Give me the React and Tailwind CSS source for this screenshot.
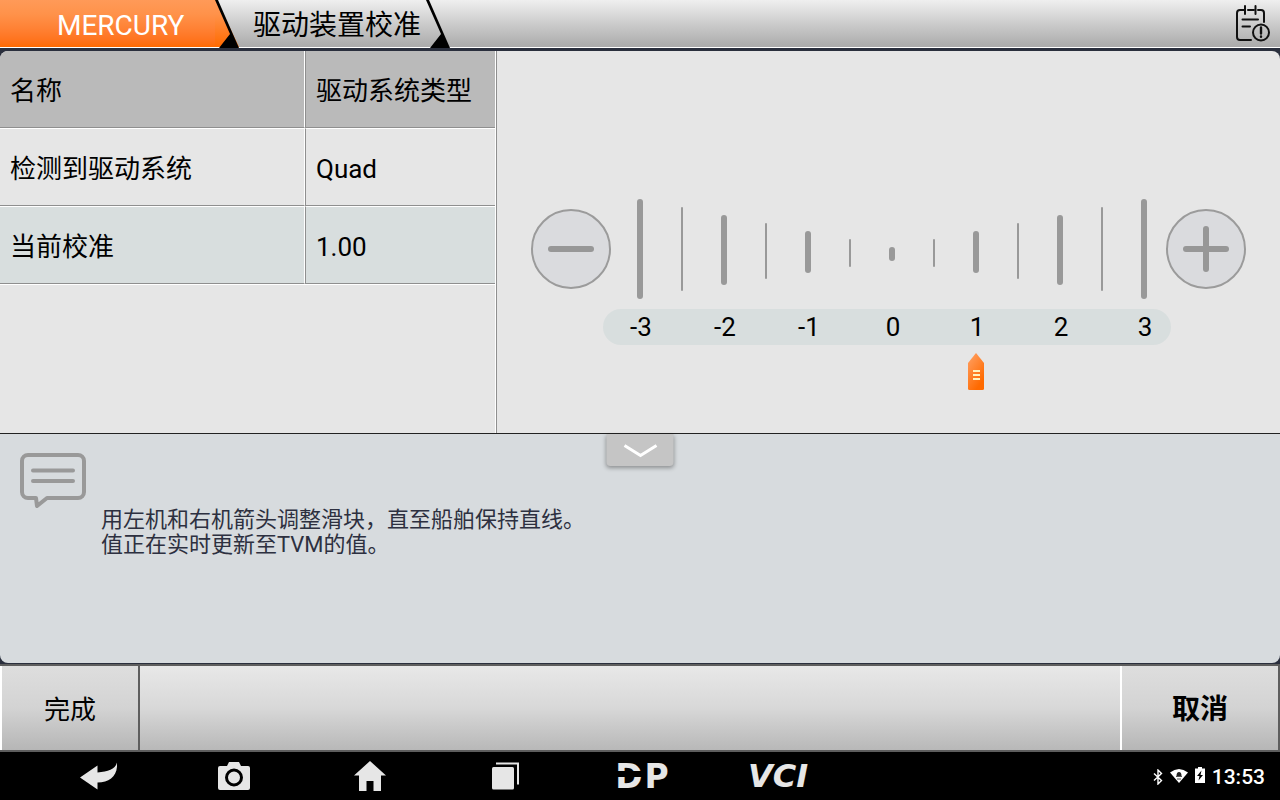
import React, { useState } from "react";

const rows = [
  { name: "检测到驱动系统", value: "Quad" },
  { name: "当前校准", value: "" },
];

const ticks = [
  "h-[100px] w-[6px]",
  "mt-2 h-[84px] w-[2px]",
  "mt-4 h-[70px] w-[6px]",
  "mt-6 h-[56px] w-[2px]",
  "mt-8 h-[42px] w-[6px]",
  "mt-10 h-[28px] w-[2px]",
  "mt-12 h-[14px] w-[6px]",
  "mt-10 h-[28px] w-[2px]",
  "mt-8 h-[42px] w-[6px]",
  "mt-6 h-[56px] w-[2px]",
  "mt-4 h-[70px] w-[6px]",
  "mt-2 h-[84px] w-[2px]",
  "h-[100px] w-[6px]",
];

const labels = [-3, -2, -1, 0, 1, 2, 3];

function TabEdge({ active }) {
  return (
    <svg className="h-12 w-6 shrink-0" viewBox="0 0 24 48" aria-hidden="true">
      <defs>
        <linearGradient id="tabOrange" x1="0" y1="0" x2="0" y2="1">
          <stop offset="0" stopColor="#ff9a58" />
          <stop offset="0.3" stopColor="#ff924a" />
          <stop offset="1" stopColor="#ff6a00" />
        </linearGradient>
      </defs>
      {active && <path d="M0 0h2l22 47H0z" fill="url(#tabOrange)" />}
      <path d="M0 0h3l21 48H4l11-14z" fill="#000" />
    </svg>
  );
}

function Header() {
  return (
    <header className="flex h-12 items-stretch bg-linear-to-b from-[#efefef] to-[#a9a9a9] text-[28px] leading-[43px] shadow-[inset_0_-1px_0_#fff]">
      <a href="#mercury" className="w-[215px] border-b border-white bg-linear-to-b from-[#ff9a58] via-[#ff924a] via-30% to-[#ff6a00] pt-1 pl-[57px] text-white">
        MERCURY
      </a>
      <TabEdge active />
      <a href="#calibration" className="w-[187px] pt-1 pl-[14px] text-black">驱动装置校准</a>
      <TabEdge />
      <button aria-label="Report" className="ml-auto pr-[9px]">
        <svg className="h-10 w-9" viewBox="0 0 36 40" fill="none" stroke="#111" strokeWidth="2" strokeLinecap="round">
          <path d="M16 36H5a3 3 0 0 1-3-3V9a3 3 0 0 1 3-3h4M13 6h6M23 6h3a3 3 0 0 1 3 3v9" />
          <path d="M10 2v8M20.500 2v8M7.500 15.500H23M7.500 22.500H15" />
          <circle cx="26" cy="28.500" r="8" />
          <path d="M26 23.500v6M26 32.500v0.200" strokeWidth="2.400" />
        </svg>
      </button>
    </header>
  );
}

function DataTable({ value }) {
  return (
    <div className="w-[496px] shrink-0 border-r border-white">
      <table className="w-full table-fixed border-separate border-spacing-0 border-b border-white text-left text-[26px] leading-8">
        <thead>
          <tr className="bg-[#bababa]">
            <th className="h-[77px] w-[305px] border-r border-b border-r-white border-b-[#8f8f8f] pt-[3px] pl-[10px] font-normal">名称</th>
            <th className="border-b border-l border-[#8f8f8f] pt-[3px] pl-[10px] font-normal">驱动系统类型</th>
          </tr>
        </thead>
        <tbody>
          {rows.map((row, i) => (
            <tr key={row.name} className={i % 2 ? "bg-[#d8dede]" : ""}>
              <td className="h-[78px] border-t border-r border-b border-white border-b-[#8f8f8f] pt-[3px] pl-[10px]">{row.name}</td>
              <td className="border-t border-b border-l border-t-white border-b-[#8f8f8f] border-l-[#8f8f8f] pt-[3px] pl-[10px]">
                {row.value || value.toFixed(2)}
              </td>
            </tr>
          ))}
        </tbody>
      </table>
    </div>
  );
}

function RoundButton({ label, plus, onClick }) {
  return (
    <button aria-label={label} onClick={onClick} className="h-20 w-20 shrink-0 rounded-full border-2 border-[#9b9b9b] bg-[#dadbde]">
      <svg className="mx-auto h-12 w-12" viewBox="0 0 48 48" stroke="#979797" strokeWidth="6" strokeLinecap="round">
        <path d="M4 24h40" />
        {plus && <path d="M24 4v40" />}
      </svg>
    </button>
  );
}

function Scale({ value, setValue }) {
  const step = (d) => setValue(Math.max(-3, Math.min(3, value + d)));

  return (
    <div className="flex-1 border-l border-[#8f8f8f] pt-[148px] pb-10">
      <div className="flex items-center px-[34px]">
        <RoundButton label="-" onClick={() => step(-0.5)} />
        <div className="flex h-[100px] flex-1 items-start justify-between pr-[19px] pl-[26px]">
          {ticks.map((tick, i) => (
            <div key={i} className="flex w-[6px] justify-center">
              <span className={"shrink-0 rounded-full bg-[#999] " + tick} />
            </div>
          ))}
        </div>
        <RoundButton label="+" plus onClick={() => step(0.5)} />
      </div>

      <div className="mt-[10px] mr-[109px] ml-[106px] flex h-9 justify-between rounded-full bg-[#d8dede] pr-2 pl-5 text-[26px] leading-9">
        {labels.map((n) => (
          <span key={n} className="w-9 text-center">{n}</span>
        ))}
      </div>

      {/* pointer under the scale */}
      <div className="relative mt-2 mr-[136px] ml-[142px] h-[38px]">
        <svg
          className="absolute top-0 h-[38px] w-4 -translate-x-1/2"
          style={{ left: ((value + 3) / 6) * 100 + "%" }}
          viewBox="0 0 16 38"
        >
          <defs>
            <linearGradient id="pointer" x1="0" y1="0.2" x2="0.5" y2="1">
              <stop offset="0" stopColor="#ff9a58" />
              <stop offset="1" stopColor="#ff6a00" />
            </linearGradient>
          </defs>
          <path d="M8 0l8 10v25.500q0 1.500-1.500 1.500h-13Q0 37 0 35.500V10z" fill="url(#pointer)" />
          <path d="M5 18h7M5 22h7M5 26h7" stroke="#fff3c0" strokeWidth="2" />
        </svg>
        <input
          type="range"
          aria-label="当前校准"
          min="-3"
          max="3"
          step="0.5"
          value={value}
          onChange={(e) => setValue(Number(e.target.value))}
          className="h-full w-full cursor-pointer opacity-0"
        />
      </div>
    </div>
  );
}

function Message({ open, toggle }) {
  return (
    <section className={"relative rounded-b-lg bg-[#d7dbde] " + (open ? "min-h-[229px]" : "min-h-8")}>
      <button
        aria-label="Toggle message"
        onClick={toggle}
        className="absolute top-0 left-1/2 flex h-8 w-[67px] -translate-x-1/2 justify-center rounded-b bg-[#c5c5c5] pt-[9px] shadow-[0_2px_4px_rgba(0,0,0,0.35)]"
      >
        <svg className="h-4 w-9" viewBox="0 0 36 16" fill="none" stroke="#fff" strokeWidth="3">
          <path d="M2 2.500l16 10 16-10" />
        </svg>
      </button>
      {open && (
        <div className="flex gap-[14px] pt-[18px] pl-[19px]">
          <svg className="h-[58px] w-[68px] shrink-0" viewBox="0 0 68 58" fill="none" stroke="#999" strokeWidth="4" strokeLinecap="round">
            <path strokeLinejoin="round" d="M17 46H9a6 6 0 0 1-6-6V9a6 6 0 0 1 6-6h50a6 6 0 0 1 6 6v31a6 6 0 0 1-6 6H28L18 54z" />
            <path d="M14 18.500h40M14 29h40" />
          </svg>
          <p className="pt-[55px] text-[22px] leading-[25px] text-[#2d3040]">
            用左机和右机箭头调整滑块，直至船舶保持直线。
            <br />
            值正在实时更新至TVM的值。
          </p>
        </div>
      )}
    </section>
  );
}

function Footer() {
  return (
    <footer className="flex h-[88px] justify-between border-y-2 border-[#5e5e5e] bg-linear-to-b from-[#e8e8e8] via-[#d8d8d8] to-[#b8b8b8]">
      <button className="w-[140px] border-r-2 border-l-2 border-r-[#5e5e5e] border-l-white bg-linear-to-b from-[#dedede] via-[#d3d3d3] to-[#b6b6b6] pt-1 text-[26px]">
        完成
      </button>
      <button className="w-[160px] border-r-2 border-l-2 border-r-[#5e5e5e] border-l-white bg-linear-to-b from-[#dedede] via-[#d3d3d3] to-[#b6b6b6] pt-1 text-[28px] font-bold">
        取消
      </button>
    </footer>
  );
}

function NavBar() {
  const item = "flex w-[136px] items-center justify-center";
  return (
    <nav className="flex h-12 items-stretch bg-black pl-[30px] text-[#e6e6e6]">
      <button aria-label="Back" className={item}>
        <svg className="h-7 w-[38px]" viewBox="0 0 38 28" fill="currentColor">
          <path d="M1 15.500L18.500 3.500v7C29 9.500 36 7.500 38 0.500c1 13-7 20-19.500 20v7z" />
        </svg>
      </button>
      <button aria-label="Screenshot" className={item}>
        <svg className="h-7 w-8" viewBox="0 0 32 28" fill="currentColor">
          <path d="M2 4h7l2-4h10l2 4h7a2 2 0 0 1 2 2v20a2 2 0 0 1-2 2H2a2 2 0 0 1-2-2V6a2 2 0 0 1 2-2z" />
          <circle cx="16" cy="15.500" r="7.500" stroke="#000" strokeWidth="3" />
        </svg>
      </button>
      <button aria-label="Home" className={item}>
        <svg className="h-[30px] w-8" viewBox="0 0 32 30" fill="currentColor">
          <path d="M16 0l16 14.500h-5V30h-7.500V20h-7v10H5V14.500H0z" />
        </svg>
      </button>
      <button aria-label="Recent" className={item}>
        <svg className="h-7 w-7" viewBox="0 0 28 28" fill="currentColor">
          <rect x="0" y="5" width="22" height="22.500" rx="1.500" />
          <path d="M4 0.500h23v22h-2v-20H4z" />
        </svg>
      </button>
      <button className={item}>
        <span className="relative flex gap-[2px] font-['DejaVu_Sans'] text-[33px] leading-none font-bold">
          <span>D</span>
          <span>P</span>
          <span className="absolute top-[11px] left-0 h-[6px] w-[28px] bg-black" />
        </span>
      </button>
      <button className={item}>
        <span className="font-['DejaVu_Sans'] text-[32px] leading-none font-bold italic">VCI</span>
      </button>
      <div className="ml-auto flex items-center gap-[7px] pt-px pr-[15px] text-white">
        <svg className="h-4 w-[10px]" viewBox="0 0 10 16" fill="none" stroke="currentColor" strokeWidth="1.400">
          <path d="M1 4.500l7.500 7L5 15V1l3.500 3.500-7.500 7" />
        </svg>
        <svg className="mb-[2px] h-[14px] w-[18px]" viewBox="0 0 18 14" fill="currentColor">
          <path d="M9 14L0 3.500Q9-3.500 18 3.500z" />
          <path d="M6.500 7q0-4 2.500-4t2.500 4z" fill="#222" />
          <path d="M6 7.500h6M7 10h4" stroke="#555" strokeWidth="1.200" />
        </svg>
        <svg className="mb-1 h-4 w-[10px]" viewBox="0 0 10 16" fill="currentColor">
          <path d="M0 1.500h3V0h4v1.500h3V16H0z" />
          <path d="M6.500 3.500L2 9h2.500l-1 4.500L8 8H5.500z" fill="#000" />
        </svg>
        <time className="text-[21px] leading-6 font-medium">13:53</time>
      </div>
    </nav>
  );
}

export default function App() {
  const [value, setValue] = useState(1);
  const [open, setOpen] = useState(true);

  return (
    <div lang="zh-CN" className="flex min-h-screen flex-col bg-[#2a2f3d] font-[Roboto,'Noto_Sans_CJK_SC',sans-serif] text-black">
      <Header />
      <main className="mt-[3px] mb-px flex flex-1 flex-col">
        <div className="flex flex-1 overflow-hidden rounded-t-lg border-b border-[#222] bg-[#e6e6e6]">
          <DataTable value={value} />
          <Scale value={value} setValue={setValue} />
        </div>
        <Message open={open} toggle={() => setOpen(!open)} />
      </main>
      <Footer />
      <NavBar />
    </div>
  );
}
